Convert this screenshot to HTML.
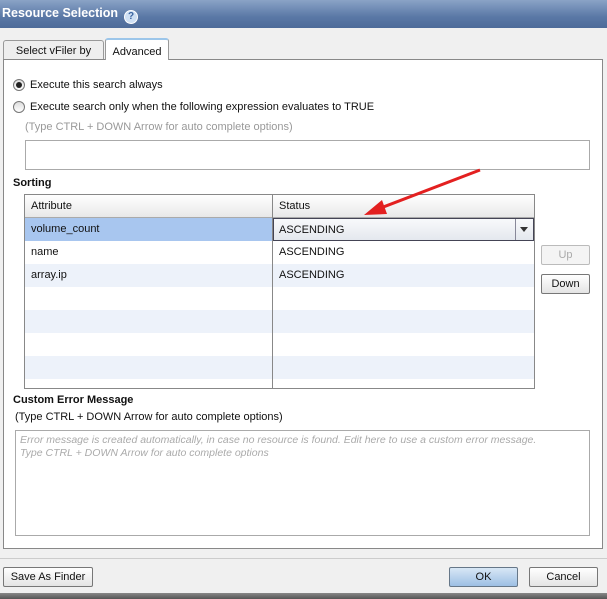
<!DOCTYPE html>
<html><head><style>
*{box-sizing:border-box;margin:0;padding:0}
body{width:607px;height:599px;background:#f0f0f0;font-family:"Liberation Sans",sans-serif;font-size:11px;color:#111;position:relative;overflow:hidden}
.abs{position:absolute}
.title{left:0;top:0;width:607px;height:28px;background:linear-gradient(#8aa3c6,#5a78a6 60%,#4d6b99);color:#fff;font-weight:bold;font-size:12.5px;padding:6px 0 0 2px}
.q{display:inline-block;width:14px;height:14px;border-radius:50%;background:#cfe0f4;border:1px solid #fff;color:#3a64a0;font-size:10px;text-align:center;line-height:12px;margin-left:6px;vertical-align:-2px}
.tab{border:1px solid #999;border-bottom:none;border-radius:3px 3px 0 0;padding:4px 0 0;text-align:center;font-size:11px}
.panel{left:3px;top:59px;width:600px;height:490px;border:1px solid #888;background:#fff}
.radio{width:12px;height:12px;border:1px solid #777;border-radius:50%;background:linear-gradient(#ddd,#fff)}
.hint{color:#999}
.box{border:1px solid #aaa;background:#fff}
.btn{border:1px solid #777;border-radius:2px;background:linear-gradient(#fff,#e4e4e4);text-align:center;font-size:11px;line-height:18px}
.row{position:absolute;left:0;width:509px;height:23px}
.row span{position:absolute;top:5px}
</style></head><body>
<div class="abs title">Resource Selection<span class="q">?</span></div>
<div class="abs tab" style="left:3px;top:40px;width:101px;height:20px;background:#eee">Select vFiler by</div>
<div class="abs tab" style="left:105px;top:38px;width:64px;height:22px;background:#fff;border-top:2px solid #9cc6ea;z-index:2;padding-top:6px">Advanced</div>
<div class="abs panel"></div>
<div class="abs radio" style="left:13px;top:79px"></div><div class="abs" style="left:16px;top:82px;width:6px;height:6px;border-radius:50%;background:#222"></div>
<div class="abs" style="left:30px;top:79px">Execute this search always</div>
<div class="abs radio" style="left:13px;top:101px"></div>
<div class="abs" style="left:30px;top:101px">Execute search only when the following expression evaluates to TRUE</div>
<div class="abs hint" style="left:25px;top:121px">(Type CTRL + DOWN Arrow for auto complete options)</div>
<div class="abs box" style="left:25px;top:140px;width:565px;height:30px"></div>
<div class="abs" style="left:13px;top:177px;font-weight:bold">Sorting</div>
<div class="abs" style="left:24px;top:194px;width:511px;height:195px;border:1px solid #888;background:#fff;overflow:hidden">
 <div class="row" style="top:0;height:23px;background:linear-gradient(#fff,#e8e8e8);border-bottom:1px solid #aaa"><span style="left:6px">Attribute</span><span style="left:254px">Status</span></div>
 <div class="row" style="top:23px;background:#a8c6ef"><span style="left:6px">volume_count</span></div>
 <div class="row" style="top:46px"><span style="left:6px">name</span><span style="left:254px">ASCENDING</span></div>
 <div class="row" style="top:69px;background:#edf2fa"><span style="left:6px">array.ip</span><span style="left:254px">ASCENDING</span></div>
 <div class="row" style="top:115px;background:#edf2fa"></div>
 <div class="row" style="top:161px;background:#edf2fa"></div>
 <div class="abs" style="left:247px;top:0;width:1px;height:195px;background:#888"></div>
 <div class="abs" style="left:248px;top:23px;width:261px;height:23px;border:1px solid #445;background:linear-gradient(#f8f9fb,#e4e8ee)"><span class="abs" style="left:5px;top:5px">ASCENDING</span><div class="abs" style="right:0;top:0;width:18px;height:21px;border-left:1px solid #889"></div><div class="abs" style="right:5px;top:8px;border:4px solid transparent;border-top:5px solid #333"></div></div>
</div>
<div class="abs btn" style="left:541px;top:245px;width:49px;height:20px;color:#aaa;border-color:#bbb;background:#f4f4f4">Up</div>
<div class="abs btn" style="left:541px;top:274px;width:49px;height:20px">Down</div>
<svg class="abs" style="left:0;top:0" width="607" height="599"><line x1="480" y1="170" x2="378" y2="209" stroke="#e32020" stroke-width="3"/><polygon points="364,215 382,200 387,214" fill="#e32020"/></svg>
<div class="abs" style="left:13px;top:394px;font-weight:bold">Custom Error Message</div>
<div class="abs" style="left:15px;top:411px">(Type CTRL + DOWN Arrow for auto complete options)</div>
<div class="abs box" style="left:15px;top:430px;width:575px;height:106px;color:#aaa;font-style:italic;font-size:10.5px;padding:3px 4px;line-height:13px">Error message is created automatically, in case no resource is found. Edit here to use a custom error message.<br>Type CTRL + DOWN Arrow for auto complete options</div>
<div class="abs" style="left:0;top:558px;width:607px;height:1px;background:#ccc"></div>
<div class="abs btn" style="left:3px;top:567px;width:90px;height:20px">Save As Finder</div>
<div class="abs btn" style="left:449px;top:567px;width:69px;height:20px;background:linear-gradient(#d8e7f6,#9dbfe4);border-color:#678">OK</div>
<div class="abs btn" style="left:529px;top:567px;width:69px;height:20px">Cancel</div>
<div class="abs" style="left:0;top:593px;width:607px;height:6px;background:linear-gradient(#888,#555)"></div>
</body></html>
